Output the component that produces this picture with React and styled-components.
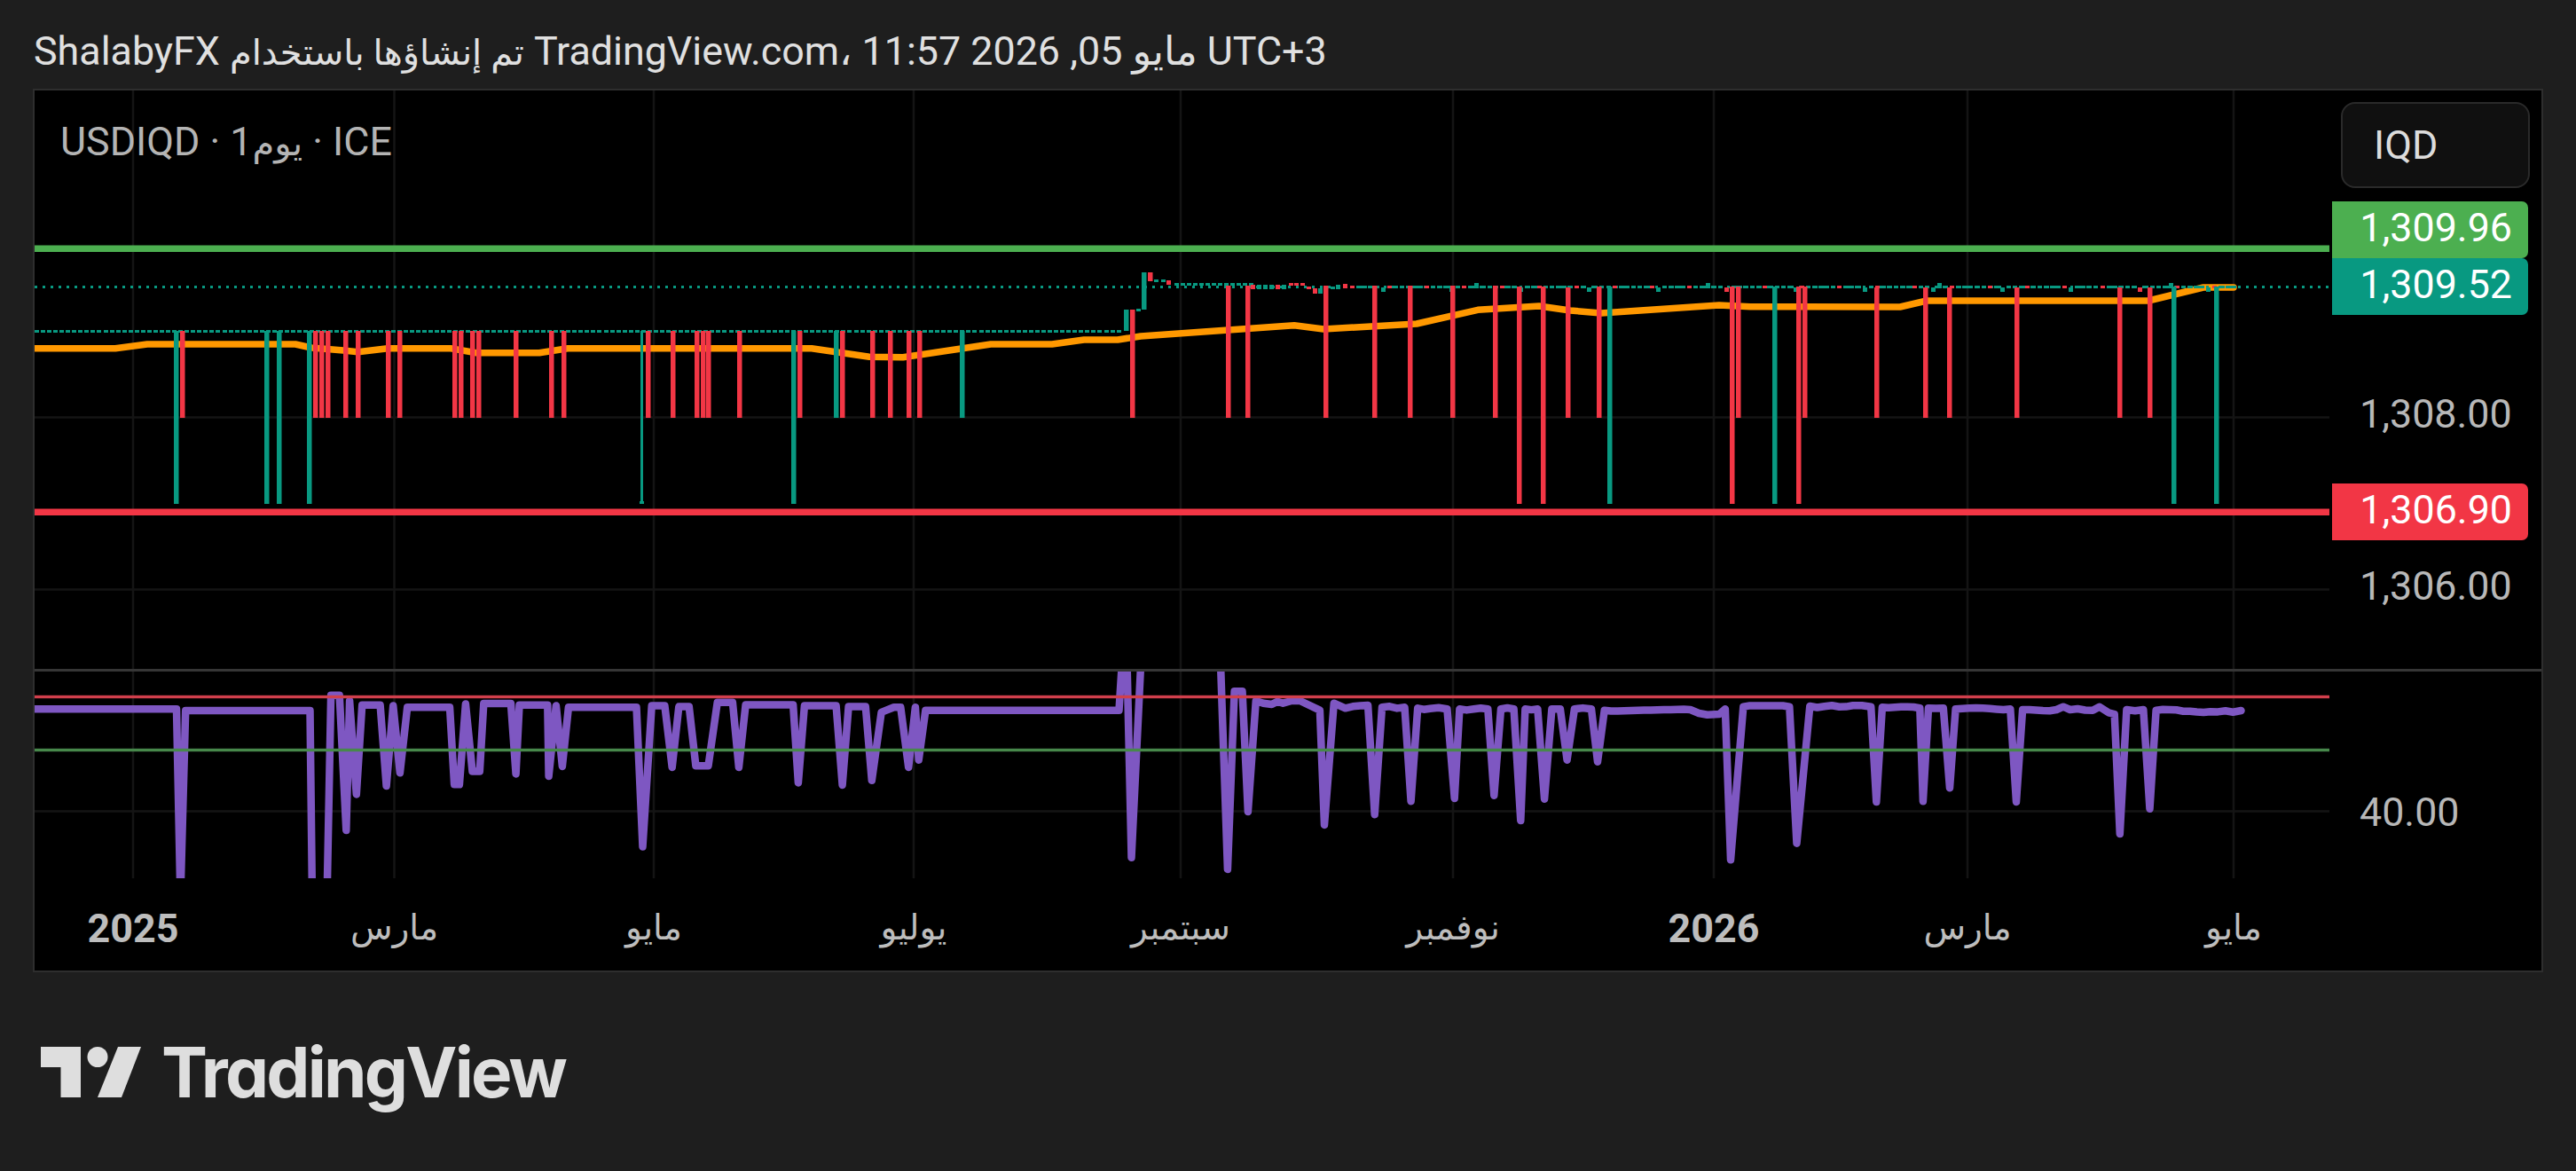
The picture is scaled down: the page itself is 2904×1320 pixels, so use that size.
import React from "react";
import styled, { createGlobalStyle } from "styled-components";

const GREEN = "#4caf50";
const TEAL = "#089981";
const RED = "#f23645";
const ORANGE = "#ff9800";
const PURPLE = "#7e57c2";
const GRID = "#141414";

const Global = createGlobalStyle`
  html, body { margin: 0; padding: 0; background: #1e1e1e; }
  body { font-family: Roboto, "Noto Sans", "DejaVu Sans", sans-serif; }
`;

const Page = styled.div`
  width: 2904px;
  height: 1320px;
  background: #1e1e1e;
  display: flex;
  flex-direction: column;
  overflow: hidden;
`;
const TitleRow = styled.div`
  height: 100px;
  padding: 18px 0 0 38px;
  box-sizing: border-box;
  display: flex;
  align-items: center;
`;
const Title = styled.div`
  font-size: 44.8px;
  line-height: 52px;
  color: #e0e0e0;
  white-space: nowrap;
  direction: ltr;
`;
const ArabicRun = styled.span`
  font-size: 40px;
`;
const Chart = styled.div`
  margin-left: 37px;
  width: 2830px;
  height: 996px;
  box-sizing: border-box;
  border: 2px solid #2e2e2e;
  background: #000;
  display: flex;
  flex-direction: column;
`;
const PaneRow = styled.div`
  display: flex;
  height: ${(p) => p.$h}px;
  position: relative;
`;
const Plot = styled.svg`
  display: block;
  width: 2587px;
  height: ${(p) => p.$h}px;
  flex: none;
`;
const Scale = styled.div`
  flex: 1;
  position: relative;
`;
const Separator = styled.div`
  height: 3px;
  background: #363636;
`;
const TimeAxis = styled.div`
  flex: 1;
  position: relative;
`;
const TimeLabel = styled.span`
  position: absolute;
  left: ${(p) => p.$x - 39}px;
  top: ${(p) => (p.$bold ? 29 : 28)}px;
  transform: translateX(-50%);
  font-size: ${(p) => (p.$bold ? 44.8 : 39)}px;
  line-height: 56px;
  color: #bdbdbd;
  white-space: nowrap;
  font-weight: ${(p) => (p.$bold ? 700 : 400)};
`;
const Legend = styled.div`
  position: absolute;
  left: 29px;
  top: 32px;
  font-size: 44.8px;
  line-height: 52px;
  color: #b4b4b4;
  white-space: nowrap;
  direction: ltr;
`;
const Unit = styled.div`
  position: absolute;
  left: 13px;
  top: 13px;
  width: 213px;
  height: 97px;
  box-sizing: border-box;
  border: 2px solid #2a2a2a;
  border-radius: 16px;
  background: #101010;
  color: #dcdcdc;
  font-size: 44.8px;
  line-height: 93px;
  padding-left: 35px;
`;
const Tick = styled.div`
  position: absolute;
  left: 34px;
  top: ${(p) => p.$y - 102 - 25}px;
  font-size: 44.8px;
  line-height: 52px;
  color: #b8b8b8;
`;
const PriceTag = styled.div`
  position: absolute;
  left: 3px;
  top: ${(p) => p.$y - 102}px;
  width: 221px;
  height: 64px;
  box-sizing: border-box;
  padding-right: 18px;
  background: ${(p) => p.$bg};
  border-radius: 0 7px 7px 0;
  color: #fff;
  font-size: 44.8px;
  line-height: 60px;
  text-align: right;
`;
const LogoRow = styled.div`
  display: flex;
  align-items: flex-start;
  gap: 23px;
  margin: 84px 0 0 46px;
`;
const LogoMark = styled.svg`
  display: block;
  width: 113px;
  height: 57px;
`;
const LogoText = styled.div`
  font-family: Inter, Lato, sans-serif;
  font-weight: 700;
  font-size: 78px;
  line-height: 57px;
  letter-spacing: -2.8px;
  color: #dedede;
  font-feature-settings: "cv11" 1;
`;

/* ---------- chart data, in page pixels ---------- */
const VGRID = [150, 444.5, 737, 1030, 1331, 1638, 1932, 2218, 2518];

const LONG = 567.5;
const SHORT = 470.7;
const bars = [
  [198.6, 373, LONG, TEAL], [205.4, 373, SHORT, RED],
  [300.4, 373, LONG, TEAL], [314.6, 373, LONG, TEAL], [348.6, 373, LONG, TEAL],
  ...[355.4, 362.5, 369.6, 389.6, 403.6, 437.5, 450.4, 512.5, 519.6, 532.5, 539.6, 581.3, 621.3, 635.3].map((x) => [x, 373, SHORT, RED]),
  [723.3, 373, LONG, TEAL, 3],
  ...[730.3, 758.3, 785.3, 792.3, 798.3, 833.3].map((x) => [x, 373, SHORT, RED]),
  [894.3, 373, LONG, TEAL], [901.3, 373, SHORT, RED], [942.3, 373, SHORT, TEAL],
  ...[949.3, 983.3, 1003.3, 1024.5, 1037].map((x) => [x, 373, SHORT, RED]),
  [1085, 373, SHORT, TEAL],
  [1269.4, 349, 373, TEAL], [1276.5, 349, SHORT, RED], [1290, 307, 349, TEAL], [1297, 307, 317, RED],
  ...[1385, 1406.6, 1495, 1549.5, 1590, 1638, 1686].map((x) => [x, 322, SHORT, RED]),
  [1713, 323, LONG, RED], [1740, 323, LONG, RED], [1768, 324, SHORT, RED], [1802.5, 323, SHORT, RED],
  [1815, 323, LONG, TEAL], [1952.5, 323, LONG, RED], [1960, 323, SHORT, RED],
  [2000.5, 323, LONG, TEAL], [2027.5, 323, LONG, RED], [2034.7, 323, SHORT, RED],
  ...[2116, 2170.4, 2197.4, 2273.5, 2390, 2423.5].map((x) => [x, 324, SHORT, RED]),
  [2450.5, 323, LONG, TEAL], [2498.5, 323, LONG, TEAL],
];

const makeCandles = () => {
  const out = [];
  for (let x = 41.5; x < 1262; x += 7.05) out.push([x, 371.5, 3, TEAL]);
  out.push([1283, 348, 3, TEAL], [1303, 315, 3, TEAL], [1311, 315, 3, TEAL], [1317, 316, 5, RED]);
  for (let x = 1326; x < 1412; x += 7.05) out.push([x, 319, 3, TEAL]);
  [[1412, 321, 5, RED], [1419, 321, 5, TEAL], [1426, 321, 5, TEAL], [1433, 321, 5, TEAL], [1440, 321, 5, RED],
   [1447, 321, 5, TEAL], [1455, 319, 3, RED], [1461, 319, 3, RED], [1468, 319, 3, RED], [1475, 323, 3, RED],
   [1482, 325, 6, RED], [1488, 325, 6, TEAL], [1502, 323, 3, TEAL], [1508, 321, 5, TEAL], [1516, 320, 5, RED],
  ].forEach((c) => out.push(c));
  let i = 0;
  for (let x = 1524; x < 2520; x += 7.05, i += 1) {
    const dip = i % 11 === 5;
    const up = i % 37 === 20;
    const color = (i * 7) % 6 === 0 ? RED : TEAL;
    out.push([x, dip ? 324 : up ? 319 : 322, dip ? 5 : up ? 6 : 3, color]);
  }
  return out;
};
const candles = makeCandles();

const EMA = [
  [39, 392.7], [130, 392.7], [166, 388], [333, 388], [351, 392], [387, 395], [403.6, 396.7], [437, 392.7],
  [508, 392.7], [537, 397.7], [608, 397.7], [640, 392.7], [915, 392.7], [980, 402.3], [1018, 402.7],
  [1117, 388], [1186, 388], [1222, 383], [1260, 383], [1286, 379], [1459, 366.7], [1492, 371], [1597, 365],
  [1666, 349.3], [1735, 345], [1770, 350], [1805, 353], [1938, 344], [1973, 345.7], [2142, 346], [2172, 339],
  [2422, 339], [2484, 324], [2518, 324],
];

const from = (ox, oy, sx, sy) => (pts) => pts.map(([x, y]) => [ox + x / sx, oy + y / sy]);
const z3 = from(0, 740, 1.568, 2.703);
const z5 = from(1000, 740, 1.568, 3);
const z7 = from(1900, 740, 1.96, 3);

const RSI_RAW = [
  ...z3([
    [60, 160], [312, 160], [319, 740], [328, 165], [548, 165], [552, 740], [565, 800], [578, 740], [585, 118], [600, 118],
    [612, 530], [618, 135], [630, 420], [640, 148], [672, 148], [683, 395], [695, 150], [707, 355], [720, 155], [795, 155],
    [803, 390], [812, 390], [823, 145], [835, 350], [848, 350], [855, 143], [903, 143], [912, 358], [918, 148], [968, 148],
    [970, 365], [983, 150], [994, 335], [1005, 155], [1125, 155], [1136, 580], [1152, 150], [1175, 150], [1188, 338],
    [1200, 153], [1218, 153], [1230, 333], [1252, 333], [1268, 140], [1295, 140], [1306, 338], [1318, 147], [1402, 147],
    [1411, 385], [1422, 150], [1478, 150], [1489, 392], [1500, 153], [1530, 153], [1541, 378], [1558, 170],
  ]),
  ...z5([
    [12, 172], [24, 172], [38, 375], [50, 172], [56, 350], [68, 182], [410, 182], [418, -60], [424, 0], [432, 680], [448, 50], [455, -60],
    [585, -60], [590, 50], [602, 720], [614, 118], [628, 118], [638, 525], [652, 150], [665, 158], [680, 162], [690, 152],
    [700, 158], [715, 150], [730, 150], [765, 182], [773, 570], [790, 158], [810, 175], [850, 165], [862, 535], [875, 172],
    [915, 172], [926, 490], [938, 175], [960, 176], [990, 178], [1003, 480], [1012, 178], [1062, 178], [1073, 470], [1085, 178], [1108, 178],
    [1120, 555], [1128, 178], [1150, 178], [1162, 482], [1175, 178], [1190, 178], [1202, 350], [1215, 178], [1245, 178],
    [1256, 356], [1268, 182], [1420, 180], [1450, 197],
  ]),
  ...z7([
    [75, 195], [88, 178], [100, 688], [128, 170], [230, 170], [246, 632], [275, 168], [340, 170], [370, 166], [410, 170], [422, 492],
    [435, 172], [518, 175], [525, 490], [537, 175], [570, 175], [584, 445], [597, 178], [718, 178], [731, 492], [745, 180],
    [820, 180], [835, 170], [850, 180], [900, 182], [915, 170], [935, 190], [948, 195], [960, 600], [975, 180], [1012, 180],
    [1026, 515], [1040, 182], [1100, 185], [1160, 187], [1210, 188], [1228, 183],
  ]),
];

/* After September the flat tops of the oscillator tremble by a pixel or two. */
const wobble = (pts) => {
  const out = [];
  pts.forEach(([x, y], i) => {
    out.push([x, y]);
    const next = pts[i + 1];
    if (!next || x < 1420) return;
    const dx = next[0] - x;
    if (dx < 14 || Math.abs(next[1] - y) > 8) return;
    const n = Math.floor(dx / 7);
    for (let k = 1; k < n; k += 1) {
      const px = x + (dx * k) / n;
      const py = y + ((next[1] - y) * k) / n;
      out.push([px, py + Math.sin(px * 1.7) * 1.3]);
    }
  });
  return out;
};
const RSI = wobble(RSI_RAW);

const toPoints = (pts) => pts.map(([x, y]) => `${x.toFixed(1)},${y.toFixed(1)}`).join(" ");

const MainPlot = () => (
  <Plot $h={652} viewBox="39 102 2587 652">
    {VGRID.map((x) => <line key={x} x1={x} x2={x} y1={102} y2={754} stroke={GRID} strokeWidth="2.5" />)}
    {[470.5, 664.5].map((y) => <line key={y} x1={39} x2={2626} y1={y} y2={y} stroke={GRID} strokeWidth="2.5" />)}
    <rect x={39} y={276.5} width={2587} height={7.5} fill={GREEN} />
    <rect x={39} y={573.5} width={2587} height={7.5} fill={RED} />
    <polyline points={toPoints(EMA)} fill="none" stroke={ORANGE} strokeWidth="7.5" strokeLinejoin="round" strokeLinecap="round" />
    <line x1={39} x2={2626} y1={323.5} y2={323.5} stroke={TEAL} strokeWidth="3" strokeDasharray="3 6" />
    {candles.map(([x, y, h, c], i) => <rect key={i} x={Math.round(x - 2.5)} y={Math.round(y)} width="5" height={h} fill={c} />)}
    {bars.map(([x, top, bottom, c, w = 5.5], i) => (
      <rect key={i} x={Math.round(x - w / 2)} y={Math.round(top)} width={w} height={Math.round(bottom - top)} fill={c} />
    ))}
    <rect x={721} y={565} width="5" height="3" fill={TEAL} />
  </Plot>
);

const RsiPlot = () => (
  <Plot $h={233} viewBox="39 757 2587 233">
    {VGRID.map((x) => <line key={x} x1={x} x2={x} y1={757} y2={990} stroke={GRID} strokeWidth="2.5" />)}
    <line x1={39} x2={2626} y1={914.6} y2={914.6} stroke={GRID} strokeWidth="2.5" />
    <polyline points={toPoints(RSI)} fill="none" stroke={PURPLE} strokeWidth="8.5" strokeLinejoin="round" strokeLinecap="round" />
    <rect x={39} y={783.8} width={2587} height={3.4} fill="#d13f4c" />
    <rect x={39} y={843.8} width={2587} height={3.4} fill="#47884b" />
  </Plot>
);

const MONTHS = [
  { x: 150, t: "2025", bold: true },
  { x: 444.5, t: "مارس" },
  { x: 737, t: "مايو" },
  { x: 1030, t: "يوليو" },
  { x: 1331, t: "سبتمبر" },
  { x: 1638, t: "نوفمبر" },
  { x: 1932, t: "2026", bold: true },
  { x: 2218, t: "مارس" },
  { x: 2518, t: "مايو" },
];

export default function App() {
  return (
    <Page>
      <Global />
      <TitleRow>
        <Title>
          ShalabyFX <ArabicRun>تم إنشاؤها باستخدام</ArabicRun> TradingView.com، مايو 05, 2026 11:57 UTC+3
        </Title>
      </TitleRow>
      <Chart>
        <PaneRow $h={652}>
          <MainPlot />
          <Legend>USDIQD · 1<ArabicRun>يوم</ArabicRun> · ICE</Legend>
          <Scale>
            <Unit>IQD</Unit>
            <Tick $y={466}>1,308.00</Tick>
            <Tick $y={660}>1,306.00</Tick>
            <PriceTag $y={227} $bg={GREEN}>1,309.96</PriceTag>
            <PriceTag $y={291} $bg={TEAL}>1,309.52</PriceTag>
            <PriceTag $y={545} $bg={RED}>1,306.90</PriceTag>
          </Scale>
        </PaneRow>
        <Separator />
        <PaneRow $h={233}>
          <RsiPlot />
          <Scale>
            <Tick $y={915 - 757 + 102}>40.00</Tick>
          </Scale>
        </PaneRow>
        <TimeAxis>
          {MONTHS.map((m) => <TimeLabel key={m.x} $x={m.x} $bold={m.bold}>{m.t}</TimeLabel>)}
        </TimeAxis>
      </Chart>
      <LogoRow>
        <LogoMark viewBox="0 0 113 57">
          <path d="M0 0H45V57H22.5V23H0Z" fill="#dedede" />
          <circle cx="64" cy="11.5" r="11.5" fill="#dedede" />
          <path d="M87 0H113L91 57H64Z" fill="#dedede" />
        </LogoMark>
        <LogoText>TradingView</LogoText>
      </LogoRow>
    </Page>
  );
}
